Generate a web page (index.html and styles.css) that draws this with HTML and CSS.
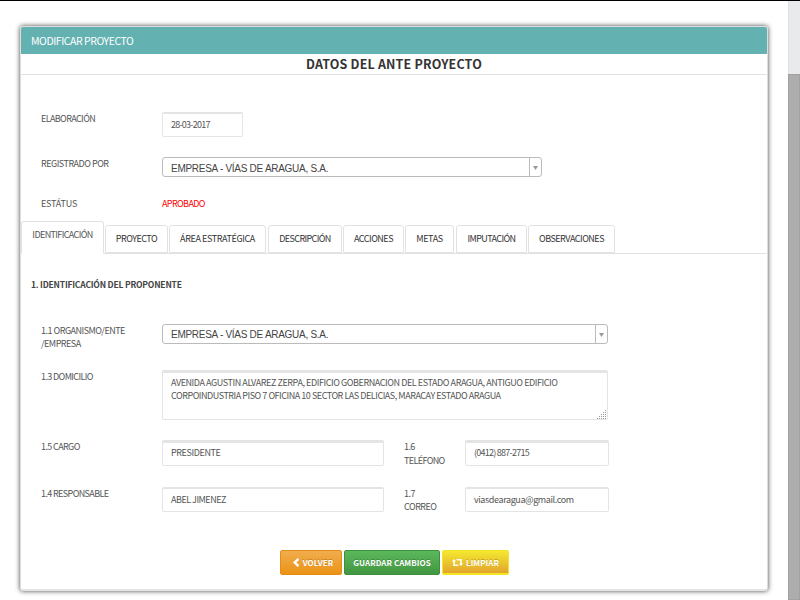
FILE: index.html
```html
<!DOCTYPE html>
<html lang="es">
<head>
<meta charset="utf-8">
<title>Modificar proyecto</title>
<link rel="stylesheet" href="styles.css">
</head>
<body>
<div class="page">
  <main class="panel">
    <header class="panel-head"><span>MODIFICAR PROYECTO</span></header>
    <h1 class="title"><span>DATOS DEL ANTE PROYECTO</span></h1>
    <div class="row r-elab"><label class="tight">ELABORACIÓN</label><div class="field date">28-03-2017</div></div>
    <div class="row r-reg"><label>REGISTRADO POR</label>
      <div class="select s-short"><span>EMPRESA - VÍAS DE ARAGUA, S.A.</span><span class="arrow"><svg width="5" height="4" viewBox="0 0 5 4"><path d="M0 0h5L2.5 4z"/></svg></span></div></div>
    <div class="row r-est"><label class="looser">ESTÁTUS</label><span class="status tight">APROBADO</span></div>
    <nav class="tabs">
      <a class="tab active w1 tight">IDENTIFICACIÓN</a>
      <a class="tab w2">PROYECTO</a>
      <a class="tab w3 loose">ÁREA ESTRATÉGICA</a>
      <a class="tab w4 tight">DESCRIPCIÓN</a>
      <a class="tab w5">ACCIONES</a>
      <a class="tab w6 loose">METAS</a>
      <a class="tab w7 tight">IMPUTACIÓN</a>
      <a class="tab w8">OBSERVACIONES</a>
    </nav>
    <h2 class="section">1. IDENTIFICACIÓN DEL PROPONENTE</h2>
    <div class="row r-org"><label>1.1 ORGANISMO/ENTE<br>/EMPRESA</label>
      <div class="select s-long"><span>EMPRESA - VÍAS DE ARAGUA, S.A.</span><span class="arrow"><svg width="5" height="4" viewBox="0 0 5 4"><path d="M0 0h5L2.5 4z"/></svg></span></div></div>
    <div class="row r-dom"><label class="tight">1.3 DOMICILIO</label>
      <div class="field area">AVENIDA AGUSTIN ALVAREZ ZERPA, EDIFICIO GOBERNACION DEL ESTADO ARAGUA, ANTIGUO EDIFICIO<br><span class="line2">CORPOINDUSTRIA PISO 7 OFICINA 10 SECTOR LAS DELICIAS, MARACAY ESTADO ARAGUA</span>
        <svg class="grip" width="10" height="9" viewBox="0 0 10 9"><path d="M8 0h1v1h-1zM6 2h1v1h-1zM8 2h1v1h-1zM4 4h1v1h-1zM6 4h1v1h-1zM8 4h1v1h-1zM2 6h1v1h-1zM4 6h1v1h-1zM6 6h1v1h-1zM8 6h1v1h-1zM0 8h1v1h-1zM2 8h1v1h-1zM4 8h1v1h-1zM6 8h1v1h-1zM8 8h1v1h-1z"/></svg></div></div>
    <div class="row r-car"><label class="tight">1.5 CARGO</label><div class="field wide loose">PRESIDENTE</div><label class="mid tight">1.6<br>TELÉFONO</label><div class="field narrow phone">(0412) 887-2715</div></div>
    <div class="row r-res"><label class="tight">1.4 RESPONSABLE</label><div class="field wide">ABEL JIMENEZ</div><label class="mid">1.7<br>CORREO</label><div class="field narrow loose">viasdearagua@gmail.com</div></div>
    <footer class="actions">
      <button class="btn orange"><svg width="8" height="9" viewBox="0 0 8 9"><path d="M5.6 0L7.3 1.7 4.4 4.5 7.3 7.3 5.6 9 1 4.5z"/></svg><span>VOLVER</span></button>
      <button class="btn green"><span>GUARDAR CAMBIOS</span></button>
      <button class="btn yellow"><svg width="11" height="7" viewBox="0 0 11 7"><path d="M2 0L4.2 2.5H2.8V5.4H5.6L6.8 7H1.2V2.5H0zM4.2 0H9.8V4.5H11L9 7 6.8 4.5H8.2V1.6H5.4z"/></svg><span>LIMPIAR</span></button>
    </footer>
  </main>
  <aside class="scroll"><div class="thumb"></div></aside>
</div>
</body>
</html>
```
FILE: styles.css
```css
* { box-sizing: border-box; }
body { margin: 0; background: #fff; overflow: hidden; font: 9px/13px "Noto Sans CJK SC", "Open Sans", sans-serif; letter-spacing: -.5px; color: #555; }
.page { display: flex; width: 800px; height: 600px; border-top: 1px solid #000; justify-content: space-between; }
.page span { white-space: nowrap; }
.tight { letter-spacing: -.62px; }
.loose { letter-spacing: -.4px; }
.looser { letter-spacing: -.2px; }
.panel { width: 748px; height: 565px; margin: 25px 0 0 20px; border: 1px solid #ddd; border-bottom: 2px solid #e4e4e4; border-radius: 3px; box-shadow: 0 0 5px #444; background: #fff; display: flex; flex-direction: column; }
.panel-head { height: 27px; flex: none; background: #63b1b1; color: #fff; padding-left: 10px; font-size: 10.5px; line-height: 28px; letter-spacing: -.45px; border-radius: 2px 2px 0 0; }
.title { margin: 0; height: 21px; flex: none; border-bottom: 1px solid #e2e2e2; text-align: center; font-size: 12.5px; line-height: 20px; letter-spacing: .17px; color: #333; }
.row { display: flex; flex: none; align-items: flex-start; padding-left: 20px; }
label { width: 121px; flex: none; white-space: nowrap; }
.field { border: 1px solid #e4e4e4; border-radius: 2px; padding-left: 8px; flex: none; white-space: nowrap; }
.date { width: 81px; height: 25px; line-height: 21px; border-top-width: 2px; letter-spacing: -.75px; }
.r-elab { height: 45px; margin-top: 37px; }
.r-elab label, .r-reg label { line-height: 14px; }
.r-reg { height: 40px; }
.r-est { height: 23px; }
.r-est label, .status { line-height: 14px; }
.status { color: #f00; }
.select { display: flex; height: 20px; border: 1px solid #bbb; border-radius: 3px; font: 10px/21px "Liberation Sans", sans-serif; letter-spacing: -.28px; color: #444; justify-content: space-between; padding-left: 8px; }
.s-short { width: 380px; }
.s-long { width: 446px; }
.s-long > span:first-child { line-height: 20px; }
.arrow { width: 12px; border-left: 1px solid #bbb; display: flex; align-items: center; justify-content: center; padding-top: 2px; }
.arrow path, .grip path { fill: #999; }
.tabs { display: flex; align-items: flex-end; height: 33px; flex: none; border-bottom: 1px solid #e2e2e2; gap: 1px; margin-top: 1px; }
.tab { height: 28px; border: 1px solid #e2e2e2; border-radius: 3px 3px 0 0; line-height: 26px; text-align: center; color: #333; flex: none; }
.tab.active { height: 33px; border-bottom: 1px solid #fff; margin-bottom: -1px; color: #555; }
.w1 { width: 83px; } .w2 { width: 63px; } .w3 { width: 97px; } .w4 { width: 74px; margin-left: 1px; }
.w5 { width: 61px; } .w6 { width: 49px; } .w7 { width: 71px; margin-left: 1px; } .w8 { width: 87px; }
.section { margin: 23px 0 0; height: 47px; flex: none; font-size: 8.5px; line-height: 14px; letter-spacing: -.2px; padding-left: 10px; color: #444; }
.r-org { height: 46px; }
.r-dom { height: 70px; }
.area { width: 446px; height: 50px; border-top-width: 3px; padding-top: 3px; position: relative; letter-spacing: -.43px; }
.line2 { letter-spacing: -.47px; }
.grip { position: absolute; right: 0; bottom: 0; }
.r-car { height: 47px; }
.r-car label { line-height: 14px; }
.wide { width: 222px; height: 26px; line-height: 19px; border-top-width: 3px; }
.mid { margin-left: 20px; width: 61px; }
.narrow { width: 144px; height: 26px; line-height: 19px; border-top-width: 3px; }
.phone { letter-spacing: -.75px; }
.r-res .field { height: 25px; border-top-width: 2px; line-height: 22px; }
.r-res { height: 63px; }
.actions { display: flex; gap: 2px; margin-left: 259px; height: 25px; }
.btn { margin: 0; padding: 0; border: 1px solid; border-radius: 2px; display: flex; align-items: center; justify-content: center; gap: 3px; font: bold 8px/13px "Noto Sans CJK SC", sans-serif; letter-spacing: .05px; color: #fff; text-shadow: 0 -1px 0 rgba(0,0,0,.2); }
.btn path { fill: #fff; }
.orange { width: 62px; padding-left: 3px; background: linear-gradient(#f0ad4e, #eb9316); border-color: #e38d13; }
.green { width: 96px; background: linear-gradient(#5cb85c, #419641); border-color: #3e8f3e; }
.yellow { width: 67px; background: linear-gradient(#f3e830, #e3a52c); border-color: #f3e526; border-bottom-width: 2px; }
.scroll { width: 12px; background: #e9eaec; border-left: 1px solid #e0e1e3; padding-top: 73px; }
.thumb { height: 526px; background: #adadae; border: 1px solid #a1a1a2; margin-left: -1px; }
```
